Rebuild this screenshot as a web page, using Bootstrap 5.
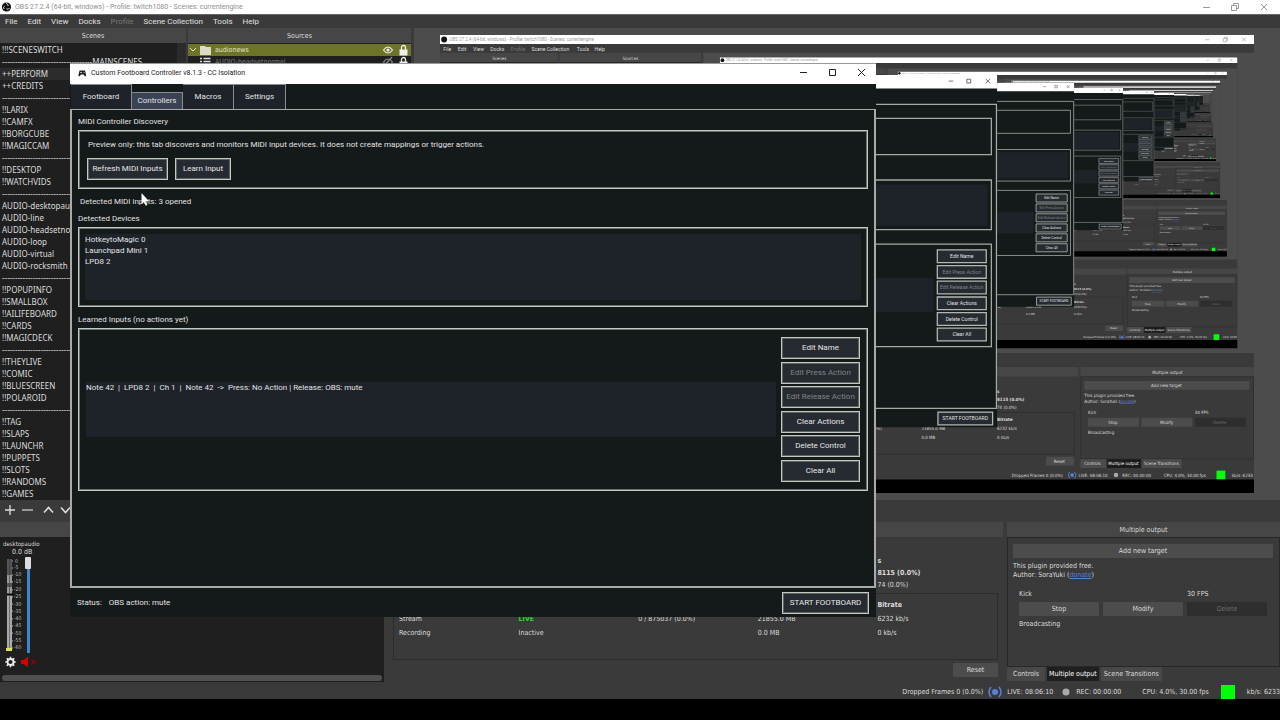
<!DOCTYPE html>
<html lang="en">
<head>
<meta charset="utf-8">
<meta name="viewport" content="width=device-width, initial-scale=1">
<title>OBS 27.2.4 - Custom Footboard Controller</title>
<link rel="stylesheet" href="https://cdn.jsdelivr.net/npm/bootstrap@5.3.0/dist/css/bootstrap.min.css">
<style>
:root{--obs:#3a3a3a;--head:#464646;--canvas:#4c4c4c;--list:#1f1f1f;--pane:#141919}
body{background:var(--obs);color:#dcdcdc;font:7px/8px "DejaVu Sans Condensed","DejaVu Sans",sans-serif;overflow:hidden}
button{font:inherit;color:inherit}
.obs-title{height:14px;background:#fff;color:#8f8f8f;font:7px/14px Roboto,sans-serif}
.obs-menu{height:14px;border-top:1px solid #666;font:8px/14px Roboto,sans-serif;padding-left:5px;gap:10px}
.obs-menu a{color:#e0e0e0;text-decoration:none}
.obs-menu a.disabled{color:#777}
.dock-head{height:15px;background:var(--head);font-size:7px;line-height:16px;text-align:center}
.scenes{flex:0 0 186px;min-width:0}
.scene-list{background:var(--list);font:8px/12px "Noto Sans",sans-serif;height:457px;border-right:9px solid #2b2b2b;padding-top:1px}
.scene-list li{padding-left:2px;height:12px;white-space:nowrap;overflow:hidden}
.scene-list .active{background:#2c2c2c}
.tools{height:20px;padding-left:4px}
.tools button,.bare{background:none;border:0;padding:0;line-height:0}
.sources{flex:0 0 223px;margin-left:2px}
.source-rows{border-top:1px solid var(--list)}
.source-row{height:12px;padding:0 3px 0 1px;background:var(--list);color:#777}
.source-row.active{background:#6d7427;color:#e4e4c8}
.preview{background:var(--canvas);padding:7px 26px;margin-left:3px}
.docks{gap:4px;margin-top:2px}
.mixer{flex:0 0 384px}
.mixer-body{background:var(--list);margin-bottom:1px}
.fader{width:96px;height:6px;transform:rotate(-90deg);appearance:none;background:none;position:absolute;left:-20px;top:45px;margin:0}
.fader::-webkit-slider-runnable-track{height:3px;background:#3d86cc}
.fader::-webkit-slider-thumb{appearance:none;width:12px;height:6px;margin-top:-2px;background:#ddd;border-radius:1px}
.meter{position:relative;width:60px;height:98px}
.hbar{height:6px;border-radius:3px;background:#505050;margin:0 2px 1px}
.stats-dock{flex:1 1 0;min-width:0}
.stats{padding:0 5px}
.stat-table{border:1px solid #2c2c2c;height:67px;padding:4px 0 4px 5px}
.stat-table table{width:100%;table-layout:fixed}
.stat-table th,.stat-table td{padding:0;height:14px}
.fifth{display:grid;grid-template-columns:repeat(5,1fr);padding:18px 1px 0 6px}
.fifth>span{grid-column:5;height:12px;line-height:12px}
.obtn{background:#4c4c4c;border:0;border-radius:1px;height:14px;line-height:14px;padding:0}
.obtn:disabled{background:#2e2e2e;color:#6c6c6c}
.multi{flex:0 0 273px}
.multi-body{border:1px solid #282828;padding:6px 6px 0 5px;height:130px}
.target{grid-template-columns:1fr 1fr 1fr;gap:4px;padding:10px 6px 0}
.multi-tabs button{height:14px;background:#484848;border:0;padding:0 6px}
.multi-tabs button.active{background:#1f1f1f;color:#fff;padding:0 2px}
.multi-tabs button.tight{padding:0 3px}
.status{height:16px;padding-top:2px;white-space:nowrap;overflow:hidden}
.status .antenna{margin:0 5px}
.live-ok{width:14px;height:14px;background:#00ff0a;margin:0 12px}
.taskbar{height:21px;background:#000}
/* floating controller window */
.win{position:absolute;left:5.47%;top:63px;width:62.97%;background:var(--pane);color:#e2e2e2;font:8px/10px Roboto,sans-serif}
.win-title{height:21px;background:#fff;border-top:1px solid #999;color:#222;padding:0 0 2px 8px;font-size:7px}
.win-title .ctl{width:29px;height:18px}
.win-tabs{height:25px;padding-left:1px}
.win-tabs button{border:1px solid #8b8d8c;border-width:1px 1px 0 0;background:#1e2329;height:25px;color:#e2e2e2;padding:0}
.win-tabs button.active{background:#3a4353;height:17px}
.pane{border:2px solid #a8aaa6;border-top-width:1px;height:479px;padding:7px 6px 0}
.box{border:1px solid #c6c8c3;box-shadow:inset 0 0 0 1px #6c706e}
.wbtn{background:#262b31;border:1px solid #c6c9c2;box-shadow:inset 0 0 0 1px #5d6261;color:#e6e6e6;height:22px;line-height:10px;padding:0}
.wbtn:disabled{color:#7f8486}
.inlist{background:#1e2329;line-height:11px}
.foot{height:29px;padding:0 7px}
.pointer-mark{position:absolute;left:141px;top:193px}
</style>
</head>
<body class="d-flex flex-column min-vh-100 m-0">
<header>
  <div class="obs-title d-flex align-items-center">
    <svg width="15" height="12" viewBox="0 0 15 12"><circle cx="6.500" cy="6" r="4.600" fill="#111"/><path d="M6 2.500a2 2 0 0 1 2 2.500M9.500 7a2 2 0 0 1-3 .8M4 8a2 2 0 0 1 .8-3" stroke="#ddd" stroke-width="1" fill="none"/></svg>
    <span>OBS 27.2.4 (64-bit, windows) - Profile: twitch1080 - Scenes: currentengine</span>
    <span class="ms-auto d-flex">
      <button class="bare" aria-label="Minimize"><svg width="29" height="13" viewBox="0 0 29 13"><path d="M10 6.500h7" stroke="#999"/></svg></button>
      <button class="bare" aria-label="Restore"><svg width="29" height="13" viewBox="0 0 29 13"><path d="M9.500 4.500h5v5h-5zM11.500 4.500v-2h5v5h-2" fill="none" stroke="#999"/></svg></button>
      <button class="bare" aria-label="Close"><svg width="29" height="13" viewBox="0 0 29 13"><path d="M10 3l6 6M16 3l-6 6" stroke="#999"/></svg></button>
    </span>
  </div>
  <nav class="obs-menu d-flex">
    <a href="#">File</a><a href="#">Edit</a><a href="#">View</a><a href="#">Docks</a><a href="#" class="disabled">Profile</a><a href="#">Scene Collection</a><a href="#">Tools</a><a href="#">Help</a>
  </nav>
</header>

<div class="d-flex">
  <section class="scenes">
    <div class="dock-head">Scenes</div>
    <ul class="scene-list list-unstyled m-0">
      <li>!!!SCENESWITCH</li><li>-----------------------------------MAINSCENES</li><li class="active">++PERFORM</li><li>++CREDITS</li>
      <li>---------------------------</li><li>!!LARIX</li><li>!!CAMFX</li><li>!!BORGCUBE</li><li>!!MAGICCAM</li>
      <li>---------------------------</li><li>!!DESKTOP</li><li>!!WATCHVIDS</li>
      <li>---------------------------</li><li>AUDIO-desktopaudio</li><li>AUDIO-line</li><li>AUDIO-headsetnormal</li><li>AUDIO-loop</li><li>AUDIO-virtual</li><li>AUDIO-rocksmith</li>
      <li>---------------------------</li><li>!!POPUPINFO</li><li>!!SMALLBOX</li><li>!!AILIFEBOARD</li><li>!!CARDS</li><li>!!MAGICDECK</li>
      <li>---------------------------</li><li>!!THEYLIVE</li><li>!!COMIC</li><li>!!BLUESCREEN</li><li>!!POLAROID</li>
      <li>---------------------------</li><li>!!TAG</li><li>!!SLAPS</li><li>!!LAUNCHR</li><li>!!PUPPETS</li><li>!!SLOTS</li><li>!!RANDOMS</li><li>!!GAMES</li>
    </ul>
    <div class="tools d-flex align-items-center">
      <button aria-label="Add"><svg width="18" height="12" viewBox="0 0 18 12"><path d="M1 6h10M6 1v10" stroke="#ddd" stroke-width="1.300"/></svg></button>
      <button aria-label="Remove"><svg width="21" height="12" viewBox="0 0 21 12"><path d="M0 6h11" stroke="#ccc" stroke-width="1.300"/></svg></button>
      <button aria-label="Up"><svg width="17" height="12" viewBox="0 0 17 12"><path d="M1 8.500l4.500-5 4.500 5" fill="none" stroke="#ddd" stroke-width="1.600"/></svg></button>
      <button aria-label="Down"><svg width="12" height="12" viewBox="0 0 12 12"><path d="M1 3.500l4.500 5 4.500-5" fill="none" stroke="#ddd" stroke-width="1.600"/></svg></button>
    </div>
  </section>
  <section class="sources">
    <div class="dock-head">Sources</div>
    <div class="source-rows">
    <div class="source-row active d-flex align-items-center">
      <svg width="26" height="12" viewBox="0 0 26 12"><path d="M1 4l3 3 3-3" stroke="#e4e4c8" fill="none"/><path d="M11 2h5l1 1h5v8H11z" fill="#dcdcc4"/></svg>
      <span class="flex-grow-1">audionews</span>
      <svg width="26" height="12" viewBox="0 0 26 12"><path d="M1.500 6q4.500-6 9 0q-4.500 6-9 0z" fill="none" stroke="#eee" stroke-width="1.200"/><circle cx="6" cy="6" r="1.600" fill="#eee"/><path d="M17.500 5.500h8v6h-8z" fill="#eee"/><path d="M19.500 6V3.500a2 2 0 0 1 4 0V6" fill="none" stroke="#eee" stroke-width="1.300"/></svg>
    </div>
    <div class="source-row d-flex align-items-center">
      <svg width="26" height="12" viewBox="0 0 26 12"><path d="M11 2.500h2M14.500 2.500h7M11 5.500h2M14.500 5.500h7M11 8.500h2M14.500 8.500h7" stroke="#ddd" stroke-width="1.500"/></svg>
      <span class="flex-grow-1">AUDIO-headsetnormal</span>
      <svg width="26" height="12" viewBox="0 0 26 12"><path d="M1.500 6q4.500-6 9 0q-4.500 6-9 0zM2 10l8-9" fill="none" stroke="#888" stroke-width="1.200"/><path d="M17.500 5.500h8v6h-8z" fill="#eee"/><path d="M19.500 6V3.500a2 2 0 0 1 4 0V6" fill="none" stroke="#eee" stroke-width="1.300"/></svg>
    </div>
    </div>
  </section>
  <section class="preview flex-grow-1 align-self-start">
    <svg class="w-100 d-block" viewBox="0 0 1280 720" role="img" aria-label="Program preview">
      <defs>
        <symbol id="s9" viewBox="0 0 1280 720"><use href="#desk"/><use href="#win"/></symbol>
        <symbol id="s8" viewBox="0 0 1280 720"><use href="#desk"/><use href="#s9" x="440" y="35" width="814" height="458"/><use href="#win"/></symbol>
        <symbol id="s7" viewBox="0 0 1280 720"><use href="#desk"/><use href="#s8" x="440" y="35" width="814" height="458"/><use href="#win"/></symbol>
        <symbol id="s6" viewBox="0 0 1280 720"><use href="#desk"/><use href="#s7" x="440" y="35" width="814" height="458"/><use href="#win"/></symbol>
        <symbol id="s5" viewBox="0 0 1280 720"><use href="#desk"/><use href="#s6" x="440" y="35" width="814" height="458"/><use href="#win"/></symbol>
        <symbol id="s4" viewBox="0 0 1280 720"><use href="#desk"/><use href="#s5" x="440" y="35" width="814" height="458"/><use href="#win"/></symbol>
        <symbol id="s3" viewBox="0 0 1280 720"><use href="#desk"/><use href="#s4" x="440" y="35" width="814" height="458"/><use href="#win"/></symbol>
        <symbol id="s2" viewBox="0 0 1280 720"><use href="#desk"/><use href="#s3" x="440" y="35" width="814" height="458"/><use href="#win"/></symbol>
      </defs>
      <g id="desk" font-family="DejaVu Sans Condensed, DejaVu Sans, sans-serif" font-size="7" fill="#dcdcdc">
        <path d="M0 0h1280v720H0z" fill="#3a3a3a"/>
        <path d="M0 0h1280v14H0z" fill="#fff"/>
        <circle cx="6.500" cy="7" r="4.600" fill="#111"/>
        <g fill="none" stroke="#999"><path d="M1203 7.500h7M1231.500 5.500h5v5h-5zM1233.500 5.500v-2h5v5h-2M1261 4l6 6M1267 4l-6 6"/></g>
        <text x="15" y="10" font-family="Roboto, sans-serif" fill="#999">OBS 27.2.4 (64-bit, windows) - Profile: twitch1080 - Scenes: currentengine</text>
        <g font-family="Roboto, sans-serif" font-size="8"><text x="5" y="25">File</text><text x="28" y="25">Edit</text><text x="52" y="25">View</text><text x="79" y="25">Docks</text><text x="111" y="25" fill="#777">Profile</text><text x="144" y="25">Scene Collection</text><text x="215" y="25">Tools</text><text x="243" y="25">Help</text></g>
        <path d="M0 28h186v15H0zM188 28h223v15H188z" fill="#464646"/>
        <path d="M0 43h186v457H0zM188 43h223v457H188z" fill="#1f1f1f"/>
        <path d="M414 28h866v472H414z" fill="#4c4c4c"/>
        <text x="82" y="39">Scenes</text><text x="287" y="39">Sources</text>
        <path d="M389 522h615v15H389zM1007 522h273v15h-273z" fill="#464646"/>
        <path d="M0 537h384v146H0z" fill="#1f1f1f"/>
        <path d="M393.500 593.500h604v66h-604zM1007.500 537.500h272v129h-272z" fill="none" stroke="#292929"/>
        <text x="876" y="563" font-weight="700">s</text><text x="876" y="575" font-weight="700">8115 (0.0%)</text><text x="876" y="588">74 (0.0%)</text>
        <text x="876" y="607" font-weight="700">Bitrate</text><text x="876" y="621">6232 kb/s</text><text x="876" y="636">0 kb/s</text>
        <text x="638" y="621">0 / 875037 (0.0%)</text><text x="757" y="621">21855.0 MB</text><text x="757" y="636">0.0 MB</text>
        <text x="399" y="636">Recording</text><text x="519" y="636">Inactive</text>
        <path d="M953 663h44v14h-44zM1013 544h260v14h-260zM1019 602h80v14h-80zM1103 602h80v14h-80zM1007 667h40v14h-40zM1104 667h62v14h-62z" fill="#4c4c4c"/>
        <path d="M1187 602h80v14h-80z" fill="#2e2e2e"/><path d="M1049 667h53v14h-53z" fill="#1b1b1b"/>
        <text x="965" y="673">Reset</text><text x="1120" y="533">Multiple output</text><text x="1118" y="554">Add new target</text>
        <text x="1013" y="569">This plugin provided free.</text><text x="1013" y="578">Author: SoraYuki (<tspan fill="#5b7fd6" text-decoration="underline">donate</tspan>)</text>
        <text x="1019" y="596">Kick</text><text x="1187" y="596">30 FPS</text><text x="1051" y="612">Stop</text><text x="1132" y="612">Modify</text><text x="1216" y="612" fill="#6c6c6c">Delete</text><text x="1019" y="627">Broadcasting</text>
        <text x="1013" y="676">Controls</text><text x="1051" y="676" fill="#fff">Multiple output</text><text x="1107" y="676">Scene Transitions</text>
        <text x="899" y="695">Dropped Frames 0 (0.0%)</text><text x="1004" y="695">LIVE: 08:06:10</text><text x="1073" y="695">REC: 00:00:00</text><text x="1138" y="695">CPU: 4.0%, 30.00 fps</text><text x="1245" y="695">kb/s: 6233</text>
        <circle cx="1063" cy="692" r="3.500" fill="#aaa"/><circle cx="994" cy="692" r="3" fill="#5b7fd6"/><path d="M990 687q-4 5 0 10M998 687q4 5 0 10" stroke="#5b7fd6" stroke-width="1.500" fill="none"/>
        <path d="M1221 685h14v14h-14z" fill="#00ff0a"/>
        <path d="M0 699h1280v21H0z" fill="#000"/>
      </g>
      <use href="#s2" x="440" y="35" width="814" height="458"/>
      <g id="win" font-family="Roboto, sans-serif" font-size="8" fill="#e2e2e2">
        <path d="M70 63h806v554H70z" fill="#141919"/><path d="M70 63h806v21H70z" fill="#fff"/>
        <path d="M800 72.500h7M828.500 69.500h6v6h-6zM858 69l7 7M865 69l-7 7" stroke="#222" fill="none"/>
        <path d="M85 235h776v65H85zM85 382h691v54H85z" fill="#1e2329"/>
        <g fill="none" stroke="#a6a8a3" stroke-width="2"><path d="M71 109h804v478H71zM79 131h788v57H79zM79 228h788v78H79zM79 329h788v161H79z"/></g>
        <g fill="#262b31" stroke="#b4b8b2" stroke-width="2"><path d="M782 338h77v20h-77zM782 362.500h77v20h-77zM782 387h77v20h-77zM782 412h77v20h-77zM782 436.500h77v20h-77zM782 461h77v20h-77zM783 593h86v20h-86z"/></g>
        <g text-anchor="middle"><text x="820.500" y="351">Edit Name</text><text x="820.500" y="375.500" fill="#7f8486">Edit Press Action</text><text x="820.500" y="400" fill="#7f8486">Edit Release Action</text><text x="820.500" y="425">Clear Actions</text><text x="820.500" y="449.500">Delete Control</text><text x="820.500" y="474">Clear All</text><text x="826" y="606">START FOOTBOARD</text></g>
      </g>
    </svg>
  </section>
</div>

<div class="docks d-flex flex-grow-1">
  <section class="mixer d-flex flex-column">
    <div class="dock-head"></div>
    <div class="mixer-body flex-grow-1 d-flex flex-column">
      <div style="padding:3px 3px 0;font-size:6px">desktopaudio</div>
      <div style="padding:0 0 1px 12px">0.0 dB</div>
      <div class="meter">
        <svg width="24" height="98" viewBox="0 0 24 98" font-size="5" fill="#bbb">
          <path d="M7 2h5v92H7z" fill="#555"/><path d="M7 39h5v53H7z" fill="#aaa"/><path d="M7 18h5v8H7zM7 30h5v6H7z" fill="#999"/><path d="M7 37h6v1H7z" fill="#000"/><path d="M9.500 2v92" stroke="#333" stroke-width=".5"/><path d="M6 91h6v3H6z" fill="#dfe05a"/>
          <path d="M12 4h1M12 11h1M12 18h1M12 25h1M12 33h1M12 40h1M12 47h1M12 54h1M12 62h1M12 69h1M12 76h1M12 84h1M12 91h1" stroke="#bbb"/>
          <text x="15" y="6">0</text><text x="14" y="12">-5</text><text x="14" y="19">-10</text><text x="14" y="26">-15</text><text x="14" y="34">-20</text><text x="14" y="41">-25</text><text x="14" y="49">-30</text><text x="14" y="56">-35</text><text x="14" y="63">-40</text><text x="14" y="70">-45</text><text x="14" y="78">-50</text><text x="14" y="85">-55</text><text x="14" y="92">-60</text>
        </svg>
        <input class="fader" type="range" min="0" max="100" value="100" aria-label="desktopaudio volume">
      </div>
      <div class="d-flex" style="padding:1px 5px 0">
        <button class="bare" aria-label="Settings"><svg width="16" height="12" viewBox="0 0 16 12"><circle cx="5.500" cy="6" r="3" fill="none" stroke="#eee" stroke-width="1.800"/><path d="M5.500 .8v1.800M5.500 9.400v1.800M.3 6h1.800M8.900 6h1.800M1.800 2.300l1.300 1.300M7.900 8.400l1.300 1.300M9.200 2.300L7.900 3.600M3.100 8.400L1.800 9.700" stroke="#eee" stroke-width="1.600"/></svg></button>
        <button class="bare" aria-label="Unmute"><svg width="16" height="12" viewBox="0 0 16 12"><path d="M0 4h2.500L7 .8v10.400L2.500 8H0z" fill="#d40000"/><path d="M10.500 4l4 4M14.500 4l-4 4" stroke="#900" stroke-width="1.300"/></svg></button>
      </div>
      <div class="hbar mt-auto"></div>
    </div>
  </section>

  <section class="stats-dock d-flex flex-column">
    <div class="dock-head"></div>
    <div class="stats flex-grow-1 d-flex flex-column">
      <div class="fifth fw-bold"><span>s</span><span>8115 (0.0%)</span><span class="fw-normal">74 (0.0%)</span></div>
      <div class="stat-table" style="margin-top:2px">
        <table>
          <thead><tr><th>Output</th><th>Status</th><th>Dropped</th><th>Total</th><th>Bitrate</th></tr></thead>
          <tbody><tr><td>Stream</td><td class="fw-bold" style="color:#1fdc1f">LIVE</td><td>0 / 875037 (0.0%)</td><td>21855.0 MB</td><td>6232 kb/s</td></tr>
          <tr><td>Recording</td><td>Inactive</td><td></td><td>0.0 MB</td><td>0 kb/s</td></tr></tbody>
        </table>
      </div>
      <button class="obtn align-self-end" style="width:45px;margin-top:3px">Reset</button>
    </div>
  </section>

  <section class="multi">
    <div class="dock-head">Multiple output</div>
    <div class="multi-body">
      <button class="obtn w-100 d-block">Add new target</button>
      <div style="padding-top:4px;line-height:9px">This plugin provided free.<br>Author: SoraYuki (<a href="#" style="color:#5b7fd6">donate</a>)</div>
      <div class="target d-grid">
        <span style="grid-column:span 2">Kick</span><span>30 FPS</span>
        <button class="obtn">Stop</button><button class="obtn">Modify</button><button class="obtn" disabled>Delete</button>
        <span>Broadcasting</span>
      </div>
    </div>
    <div class="multi-tabs d-flex" style="gap:2px"><button>Controls</button><button class="active">Multiple output</button><button class="tight">Scene Transitions</button></div>
  </section>
</div>

<footer>
  <div class="status d-flex align-items-center justify-content-end">
    <span>Dropped Frames 0 (0.0%)</span>
    <svg class="antenna" width="14" height="12" viewBox="0 0 14 12"><circle cx="7" cy="6" r="3" fill="#5b7fd6"/><path d="M3 1q-4 5 0 10M11 1q4 5 0 10" stroke="#5b7fd6" stroke-width="1.500" fill="none"/></svg>
    <span>LIVE: 08:06:10</span>
    <svg style="margin:0 6px 0 9px" width="8" height="8" viewBox="0 0 8 8"><circle cx="4" cy="4" r="3.500" fill="#aaa"/></svg>
    <span style="margin-right:21px">REC: 00:00:00</span>
    <span>CPU: 4.0%, 30.00 fps</span>
    <span class="live-ok"></span>
    <span>kb/s: 6233</span>
  </div>
  <div class="taskbar"></div>
</footer>

<main class="win">
  <div class="win-title d-flex align-items-center">
    <svg width="13" height="9" viewBox="0 0 13 9"><path d="M1.500 1.500h5.500l1.200 5-1.200 1-1.500-2h-2.500l-1.500 2-1.200-1z" fill="#222"/><path d="M2 3.500h2M5.500 3.500h1" stroke="#ddd" stroke-width=".8"/></svg>
    <span>Custom Footboard Controller v8.1.3 - CC Isolation</span>
    <span class="ms-auto d-flex">
      <button class="bare ctl" aria-label="Minimize"><svg width="29" height="18" viewBox="0 0 29 18"><path d="M11 8.500h7" stroke="#222"/></svg></button>
      <button class="bare ctl" aria-label="Maximize"><svg width="29" height="18" viewBox="0 0 29 18"><path d="M11.500 5.500h6v6h-6z" fill="none" stroke="#222"/></svg></button>
      <button class="bare ctl" aria-label="Close"><svg width="29" height="18" viewBox="0 0 29 18"><path d="M11 5l7 7M18 5l-7 7" stroke="#222"/></svg></button>
    </span>
  </div>
  <div class="win-tabs d-flex align-items-end" role="tablist">
    <button role="tab" style="width:61px">Footboard</button><button role="tab" class="active" aria-selected="true" style="width:51px">Controllers</button><button role="tab" style="width:51px">Macros</button><button role="tab" style="width:52px">Settings</button>
  </div>
  <div class="pane d-flex flex-column">
    <div>MIDI Controller Discovery</div>
    <div class="box" style="margin-top:3px;padding:9px 8px 8px">
      <div style="padding-left:1px">Preview only: this tab discovers and monitors MIDI input devices. It does not create mappings or trigger actions.</div>
      <div class="d-flex" style="gap:7px;margin-top:8px"><button class="wbtn" style="width:81px">Refresh MIDI Inputs</button><button class="wbtn" style="width:56px">Learn Input</button></div>
    </div>
    <div style="padding:8px 2px 0">Detected MIDI inputs: 3 opened</div>
    <div style="padding-top:7px">Detected Devices</div>
    <div class="box" style="margin-top:3px;padding:6px">
      <ul class="inlist list-unstyled m-0" style="height:66px"><li>HotkeytoMagic 0</li><li>Launchpad Mini 1</li><li>LPD8 2</li></ul>
    </div>
    <div style="padding-top:8px">Learned Inputs (no actions yet)</div>
    <div class="box d-flex align-items-center" style="margin-top:3px;padding:8px 7px;gap:5px">
      <div class="inlist flex-grow-1" style="height:55px;white-space:pre">Note 42  |  LPD8 2  |  Ch 1  |  Note 42  -&gt;  Press: No Action | Release: OBS: mute</div>
      <div class="d-flex flex-column justify-content-between" style="width:79px;height:145px">
        <button class="wbtn">Edit Name</button><button class="wbtn" disabled>Edit Press Action</button><button class="wbtn" disabled>Edit Release Action</button><button class="wbtn">Clear Actions</button><button class="wbtn">Delete Control</button><button class="wbtn">Clear All</button>
      </div>
    </div>
  </div>
  <div class="foot d-flex align-items-center">
    <span>Status:</span><span style="margin-left:7px">OBS action: mute</span>
    <button class="wbtn ms-auto" style="width:87px">START FOOTBOARD</button>
  </div>
</main>
<svg class="pointer-mark" width="9" height="14" viewBox="0 0 9 14" aria-hidden="true"><path d="M.5 0v11l2.500-2.200 1.700 4 1.600-.8-1.700-3.700h3.400z" fill="#fff"/></svg>
<script src="https://cdn.jsdelivr.net/npm/bootstrap@5.3.0/dist/js/bootstrap.bundle.min.js"></script>
</body>
</html>
